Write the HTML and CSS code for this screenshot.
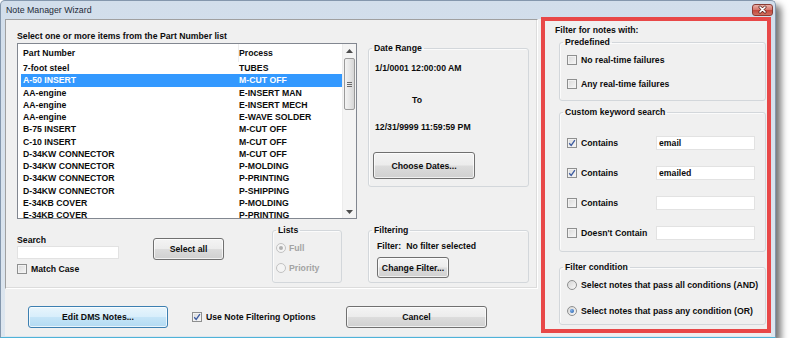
FILE: index.html
```html
<!DOCTYPE html>
<html>
<head>
<meta charset="utf-8">
<title>Note Manager Wizard</title>
<link rel="stylesheet" href="styles.css">
</head>
<body>
<div class="window">
  <div class="titlebar">
    <span class="title">Note Manager Wizard</span>
    <span class="close"><svg width="19" height="10" viewBox="0 0 19 10"><path d="M7 2 L12 7 M12 2 L7 7" stroke="#5a1e18" stroke-width="3" stroke-linecap="round"/><path d="M7 2 L12 7 M12 2 L7 7" stroke="#ffffff" stroke-width="1.6" stroke-linecap="round"/></svg></span>
  </div>
  <div class="client">
    <div class="main-panel">
      <div class="col-a">
        <div class="caption">Select one or more items from the Part Number list</div>
        <div class="listview">
          <div class="lv-body">
            <div class="lv-header"><span class="c1">Part Number</span><span class="c2">Process</span></div>
            <div class="lv-row"><span class="c1">7-foot steel</span><span class="c2">TUBES</span></div>
            <div class="lv-row selected"><span class="c1">A-50 INSERT</span><span class="c2">M-CUT OFF</span></div>
            <div class="lv-row"><span class="c1">AA-engine</span><span class="c2">E-INSERT MAN</span></div>
            <div class="lv-row"><span class="c1">AA-engine</span><span class="c2">E-INSERT MECH</span></div>
            <div class="lv-row"><span class="c1">AA-engine</span><span class="c2">E-WAVE SOLDER</span></div>
            <div class="lv-row"><span class="c1">B-75 INSERT</span><span class="c2">M-CUT OFF</span></div>
            <div class="lv-row"><span class="c1">C-10 INSERT</span><span class="c2">M-CUT OFF</span></div>
            <div class="lv-row"><span class="c1">D-34KW CONNECTOR</span><span class="c2">M-CUT OFF</span></div>
            <div class="lv-row"><span class="c1">D-34KW CONNECTOR</span><span class="c2">P-MOLDING</span></div>
            <div class="lv-row"><span class="c1">D-34KW CONNECTOR</span><span class="c2">P-PRINTING</span></div>
            <div class="lv-row"><span class="c1">D-34KW CONNECTOR</span><span class="c2">P-SHIPPING</span></div>
            <div class="lv-row"><span class="c1">E-34KB COVER</span><span class="c2">P-MOLDING</span></div>
            <div class="lv-row"><span class="c1">E-34KB COVER</span><span class="c2">P-PRINTING</span></div>
          </div>
          <div class="vscroll">
            <div class="sb-btn"><svg width="7" height="4" viewBox="0 0 7 4"><path d="M0 4 L3.5 0 L7 4 Z" fill="#4d4d4d"/></svg></div>
            <div class="sb-thumb"><span></span><span></span><span></span></div>
            <div class="sb-track"></div>
            <div class="sb-btn"><svg width="7" height="4" viewBox="0 0 7 4"><path d="M0 0 L3.5 4 L7 0 Z" fill="#4d4d4d"/></svg></div>
          </div>
        </div>
      </div>

      <fieldset class="group date-group">
        <legend>Date Range</legend>
        <div class="date-body">
          <div class="date-line">1/1/0001 12:00:00 AM</div>
          <div class="date-to">To</div>
          <div class="date-line date-until">12/31/9999 11:59:59 PM</div>
          <button class="btn choose-btn">Choose Dates...</button>
        </div>
      </fieldset>

      <div class="bottom-left">
        <div class="search-block">
          <div class="search-label">Search</div>
          <input class="textbox search-box" type="text" value="">
          <div class="chk-row match-case"><span class="cb"></span><span>Match Case</span></div>
        </div>
        <button class="btn select-all">Select all</button>
        <fieldset class="group lists-group">
          <legend>Lists</legend>
          <div class="lists-body">
            <div class="chk-row disabled"><span class="rb dis"><span class="dot"></span></span><span>Full</span></div>
            <div class="chk-row disabled"><span class="rb dis"></span><span>Priority</span></div>
          </div>
        </fieldset>
      </div>

      <fieldset class="group filtering-group">
        <legend>Filtering</legend>
        <div class="filtering-body">
          <div class="filter-line"><span>Filter:</span><span class="filter-val">No filter selected</span></div>
          <button class="btn change-btn">Change Filter...</button>
        </div>
      </fieldset>
    </div>

    <div class="right-panel">
      <div class="rp-caption">Filter for notes with:</div>
      <fieldset class="group rp-group predefined">
        <legend>Predefined</legend>
        <div class="stack-body">
          <div class="chk-row"><span class="cb"></span><span>No real-time failures</span></div>
          <div class="chk-row"><span class="cb"></span><span>Any real-time failures</span></div>
        </div>
      </fieldset>
      <fieldset class="group rp-group custom">
        <legend>Custom keyword search</legend>
        <div class="custom-body">
          <div class="chk-row"><span class="cb"><svg width="8" height="8" viewBox="0 0 8 8"><path d="M1.2 4.2 L3.2 6.4 L6.9 1.2" stroke="#3b5aa0" stroke-width="1.3" fill="none"/></svg></span><span>Contains</span></div>
          <input class="textbox kw" type="text" value="email">
          <div class="chk-row"><span class="cb"><svg width="8" height="8" viewBox="0 0 8 8"><path d="M1.2 4.2 L3.2 6.4 L6.9 1.2" stroke="#3b5aa0" stroke-width="1.3" fill="none"/></svg></span><span>Contains</span></div>
          <input class="textbox kw" type="text" value="emailed">
          <div class="chk-row"><span class="cb"></span><span>Contains</span></div>
          <input class="textbox kw" type="text" value="">
          <div class="chk-row"><span class="cb"></span><span>Doesn't Contain</span></div>
          <input class="textbox kw" type="text" value="">
        </div>
      </fieldset>
      <fieldset class="group rp-group condition">
        <legend>Filter condition</legend>
        <div class="stack-body cond-body">
          <div class="chk-row"><span class="rb"></span><span>Select notes that pass all conditions (AND)</span></div>
          <div class="chk-row"><span class="rb"><span class="dot"></span></span><span>Select notes that pass any condition (OR)</span></div>
        </div>
      </fieldset>
    </div>

    <div class="button-bar">
      <button class="btn default-btn">Edit DMS Notes...</button>
      <div class="use-filter">
        <div class="chk-row"><span class="cb"><svg width="8" height="8" viewBox="0 0 8 8"><path d="M1.2 4.2 L3.2 6.4 L6.9 1.2" stroke="#3b5aa0" stroke-width="1.3" fill="none"/></svg></span><span>Use Note Filtering Options</span></div>
      </div>
      <button class="btn cancel-btn">Cancel</button>
    </div>
  </div>
  <div class="highlight"></div>
</div>
</body>
</html>
```

FILE: styles.css
```css
* { box-sizing: border-box; }
html, body { margin: 0; padding: 0; background: #ffffff; }
body {
  font: bold 8.7px/12px "Liberation Sans", Arial, sans-serif;
  color: #0c0c0c;
}

.window {
  position: relative;
  width: 776px;
  height: 338px;
  display: flex;
  flex-direction: column;
  background: linear-gradient(#d2deeb, #dde6ef);
  border: 1px solid #8497ad;
  border-bottom-color: #4fb3d8;
  border-radius: 5px 5px 0 0;
  box-shadow: 5px 5px 7px rgba(0, 0, 0, 0.55);
}

.titlebar {
  height: 18px;
  display: flex;
  align-items: flex-start;
  padding-left: 5px;
}
.title {
  font-weight: normal;
  font-size: 8.8px;
  line-height: 18px;
  color: #1e2a38;
}
.close {
  margin-left: auto;
  margin-right: 2px;
  margin-top: 3px;
  width: 21px;
  height: 12px;
  border: 1px solid #8a3b33;
  border-radius: 3px;
  background: linear-gradient(#eab1a7, #d6766b 48%, #c4473c 52%, #d0705f);
  display: flex;
  align-items: center;
  justify-content: center;
}

.client {
  margin: 0 4px;
  width: 766px;
  height: 317px;
  background: #f0f0f0;
  display: grid;
  grid-template-columns: 533px 230px;
  grid-template-rows: 270px 47px;
  column-gap: 3px;
}

/* main left panel */
.main-panel {
  grid-column: 1;
  grid-row: 1;
  border: 1px solid;
  border-color: #a0a0a0 #ffffff #ffffff #a0a0a0;
  box-shadow: inset -1px -1px 0 #dcdcdc;
  padding: 10px 8px 5px 11px;
  display: grid;
  grid-template-columns: 340px 161px;
  grid-template-rows: 189px 59px;
  column-gap: 11px;
  row-gap: 5px;
}

.col-a {
  grid-column: 1;
  grid-row: 1;
  display: flex;
  flex-direction: column;
}
.caption { height: 12px; white-space: nowrap; }

.listview {
  margin-top: 1px;
  height: 176px;
  border: 1px solid #828790;
  background: #ffffff;
  display: flex;
  overflow: hidden;
}
.lv-body {
  width: 324px;
  padding-left: 3px;
  overflow: hidden;
}
.lv-header {
  height: 18px;
  line-height: 18px;
  display: flex;
  white-space: nowrap;
}
.lv-header .c1 { border-right: 1px solid #ededed; }
.lv-row {
  width: 321px;
  height: 12.25px;
  line-height: 12.25px;
  display: flex;
  white-space: nowrap;
}
.c1 { width: 218px; padding-left: 2px; flex: none; }
.c2 { flex: 1; }
.lv-row.selected { background: #3399ff; color: #ffffff; }

.vscroll {
  width: 14px;
  flex: none;
  display: flex;
  flex-direction: column;
  background: #f4f4f4;
  border-left: 1px solid #ececec;
}
.sb-btn {
  height: 13px;
  display: flex;
  align-items: center;
  justify-content: center;
}
.sb-thumb {
  height: 52px;
  margin: 1px 1px 0 1px;
  border: 1px solid #9a9a9a;
  border-radius: 2px;
  background: linear-gradient(90deg, #f3f3f3, #e6e6e6 50%, #d6d6d6);
  display: flex;
  flex-direction: column;
  align-items: center;
  justify-content: center;
  gap: 1px;
}
.sb-thumb span { width: 5px; height: 1px; background: #6b6b6b; }
.sb-track { flex: 1; }

/* group boxes */
.group {
  margin: 0;
  padding: 0;
  min-width: 0;
  border: 1px solid #d3d7db;
  border-radius: 3px;
  box-shadow: inset 1px 1px 0 #fbfbfb;
}
.group > legend {
  margin-left: 3px;
  padding: 0 2px;
  line-height: 12px;
  font-weight: bold;
}

.date-group {
  grid-column: 2;
  grid-row: 1;
  align-self: start;
  margin-top: 12px;
  height: 145px;
}
.date-body {
  padding: 8px 0 0 6px;
  display: flex;
  flex-direction: column;
  align-items: flex-start;
}
.date-line { height: 12px; white-space: nowrap; }
.date-to { height: 12px; margin-top: 20px; padding-left: 37px; }
.date-until { margin-top: 15px; }
.choose-btn { margin-top: 19px; margin-left: -2px; width: 102px; height: 27px; }

.bottom-left {
  grid-column: 1;
  grid-row: 2;
  display: flex;
  align-items: flex-start;
}
.search-block {
  width: 102px;
  margin-top: 10px;
  display: flex;
  flex-direction: column;
}
.search-label { height: 12px; }
.search-box { margin-top: 1px; width: 102px; height: 13px; }
.match-case { margin-top: 4px; }
.select-all { margin-left: 34px; margin-top: 14px; width: 71px; height: 22px; }
.lists-group { margin-left: 48px; width: 70px; height: 59px; }
.lists-body {
  padding: 6px 0 0 3px;
  display: flex;
  flex-direction: column;
  gap: 8px;
}

.filtering-group { grid-column: 2; grid-row: 2; height: 59px; }
.filtering-body {
  padding: 4px 0 0 8px;
  display: flex;
  flex-direction: column;
  align-items: flex-start;
}
.filter-line { height: 12px; display: flex; gap: 5px; white-space: nowrap; }
.change-btn { margin-top: 5px; width: 72px; height: 21px; }

/* controls */
.btn {
  display: flex;
  align-items: center;
  justify-content: center;
  padding: 0;
  font: inherit;
  color: #0c0c0c;
  border: 1px solid #707070;
  border-radius: 3px;
  background: linear-gradient(#f4f4f4, #ececec 48%, #dcdcdc 52%, #d0d0d0);
  box-shadow: inset 0 0 0 1px rgba(255, 255, 255, 0.7);
  white-space: nowrap;
}
.default-btn {
  border-color: #3c7fb1;
  background: linear-gradient(#e8f5fc, #d8eefb 48%, #c4e4f7 52%, #b3daf2);
}

.chk-row {
  height: 12px;
  display: flex;
  align-items: center;
  gap: 4px;
  white-space: nowrap;
}
.cb {
  width: 10px;
  height: 10px;
  flex: none;
  border: 1px solid #8e8f8f;
  background: linear-gradient(135deg, #d9d9d9, #f7f7f7);
  box-shadow: inset 0 0 0 1px #f2f2f2;
  display: flex;
  align-items: center;
  justify-content: center;
}
.rb {
  width: 10px;
  height: 10px;
  flex: none;
  border: 1px solid #8e8f8f;
  border-radius: 50%;
  background: linear-gradient(135deg, #d5d5d5, #f9f9f9);
  display: flex;
  align-items: center;
  justify-content: center;
}
.rb .dot {
  width: 4px;
  height: 4px;
  border-radius: 50%;
  background: radial-gradient(circle at 35% 35%, #7fb0e8, #1f5aa8);
}
.rb.dis { border-color: #c2c2c2; background: #f4f4f4; }
.rb.dis .dot { background: #b0b0b0; }
.disabled { color: #a3a3a3; gap: 3px; }

.textbox {
  margin: 0;
  padding: 0 2px;
  font: inherit;
  line-height: 12px;
  color: #0c0c0c;
  background: #ffffff;
  border: 1px solid #e2e2e2;
  outline: none;
}

/* right panel */
.right-panel {
  grid-column: 2;
  grid-row: 1 / span 2;
  padding: 5px 0 0 14px;
  display: flex;
  flex-direction: column;
  align-items: flex-start;
}
.rp-caption { height: 12px; white-space: nowrap; }
.rp-group { margin-left: 4px; width: 207px; }
.predefined { height: 65px; }
.custom { margin-top: 5px; height: 146px; }
.condition { margin-top: 9px; height: 64px; }
.stack-body {
  padding: 6px 0 0 7px;
  display: flex;
  flex-direction: column;
  gap: 12px;
}
.cond-body { gap: 14px; }
.custom-body {
  padding: 17px 0 0 7px;
  display: grid;
  grid-template-columns: 89px 99px;
  grid-auto-rows: 16px;
  row-gap: 14px;
  align-items: center;
}
.kw { width: 99px; height: 14px; }

/* bottom button bar */
.button-bar {
  grid-column: 1;
  grid-row: 2;
  padding: 17px 0 0 23px;
  display: grid;
  grid-template-columns: 140px 178px 141px;
  grid-template-rows: 22px;
  align-items: center;
}
.default-btn, .cancel-btn { height: 22px; }
.use-filter { padding-left: 24px; }

/* annotation highlight */
.highlight {
  position: absolute;
  left: 540px;
  top: 16px;
  width: 230px;
  height: 316px;
  border: 4px solid #e84848;
  pointer-events: none;
}
```
